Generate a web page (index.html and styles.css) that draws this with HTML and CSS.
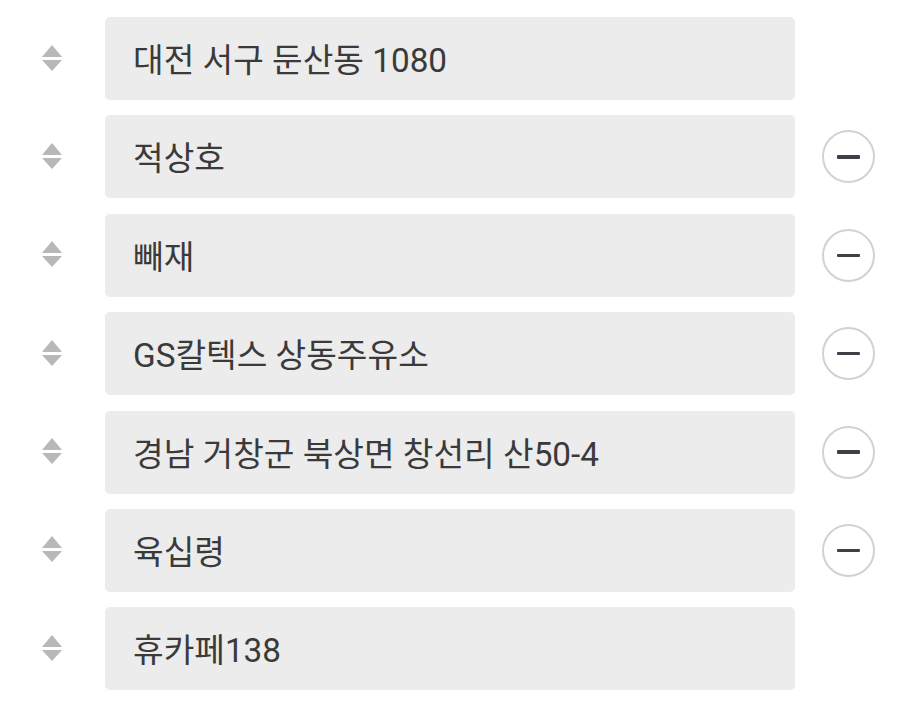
FILE: index.html
```html
<!DOCTYPE html>
<html lang="ko">
<head>
<meta charset="utf-8">
<link rel="stylesheet" href="styles.css">
</head>
<body>
<div class="list">
  <div class="row">
    <div class="handle"><svg width="20" height="26" viewBox="0 0 20 26"><path d="M10 0 L20 12 L0 12 Z" fill="#b8b8b8"/><path d="M0 15 L20 15 L10 26 Z" fill="#b8b8b8"/></svg></div>
    <div class="field">대전 서구 둔산동 1080</div>
    <div class="act"></div>
  </div>
  <div class="row">
    <div class="handle"><svg width="20" height="26" viewBox="0 0 20 26"><path d="M10 0 L20 12 L0 12 Z" fill="#b8b8b8"/><path d="M0 15 L20 15 L10 26 Z" fill="#b8b8b8"/></svg></div>
    <div class="field">적상호</div>
    <div class="act"><span class="minus"></span></div>
  </div>
  <div class="row">
    <div class="handle"><svg width="20" height="26" viewBox="0 0 20 26"><path d="M10 0 L20 12 L0 12 Z" fill="#b8b8b8"/><path d="M0 15 L20 15 L10 26 Z" fill="#b8b8b8"/></svg></div>
    <div class="field">빼재</div>
    <div class="act"><span class="minus"></span></div>
  </div>
  <div class="row">
    <div class="handle"><svg width="20" height="26" viewBox="0 0 20 26"><path d="M10 0 L20 12 L0 12 Z" fill="#b8b8b8"/><path d="M0 15 L20 15 L10 26 Z" fill="#b8b8b8"/></svg></div>
    <div class="field">GS칼텍스 상동주유소</div>
    <div class="act"><span class="minus"></span></div>
  </div>
  <div class="row">
    <div class="handle"><svg width="20" height="26" viewBox="0 0 20 26"><path d="M10 0 L20 12 L0 12 Z" fill="#b8b8b8"/><path d="M0 15 L20 15 L10 26 Z" fill="#b8b8b8"/></svg></div>
    <div class="field">경남 거창군 북상면 창선리 산50-4</div>
    <div class="act"><span class="minus"></span></div>
  </div>
  <div class="row">
    <div class="handle"><svg width="20" height="26" viewBox="0 0 20 26"><path d="M10 0 L20 12 L0 12 Z" fill="#b8b8b8"/><path d="M0 15 L20 15 L10 26 Z" fill="#b8b8b8"/></svg></div>
    <div class="field">육십령</div>
    <div class="act"><span class="minus"></span></div>
  </div>
  <div class="row">
    <div class="handle"><svg width="20" height="26" viewBox="0 0 20 26"><path d="M10 0 L20 12 L0 12 Z" fill="#b8b8b8"/><path d="M0 15 L20 15 L10 26 Z" fill="#b8b8b8"/></svg></div>
    <div class="field">휴카페138</div>
    <div class="act"></div>
  </div>
</div>
</body>
</html>
```

FILE: styles.css
```css
html, body {
  margin: 0;
  padding: 0;
  background: #ffffff;
}
body {
  font-family: "Roboto", "Noto Sans CJK KR", sans-serif;
  width: 900px;
  height: 705px;
  overflow: hidden;
}
.list {
  display: flex;
  flex-direction: column;
  gap: 15.4px;
  padding-top: 17px;
}
.row {
  display: flex;
  align-items: center;
  height: 83px;
}
.handle {
  width: 105px;
  display: flex;
  justify-content: flex-start;
  padding-left: 42px;
  padding-bottom: 2px;
  box-sizing: border-box;
}
.handle svg {
  display: block;
}
.field {
  width: 690px;
  height: 83px;
  box-sizing: border-box;
  background: #ececec;
  border-radius: 5px;
  display: flex;
  align-items: center;
  padding-left: 28px;
  padding-bottom: 2px;
  font-size: 33.3px;
  color: #3a3a3a;
}
.act {
  width: 105px;
  display: flex;
  justify-content: center;
  padding-left: 1px;
  box-sizing: border-box;
}
.minus {
  width: 53px;
  height: 53px;
  box-sizing: border-box;
  border: 2px solid #d2d2d2;
  border-radius: 50%;
  display: flex;
  align-items: center;
  justify-content: center;
}
.minus::before {
  content: "";
  width: 23px;
  height: 3.5px;
  background: #3b4146;
  border-radius: 1px;
}
```
